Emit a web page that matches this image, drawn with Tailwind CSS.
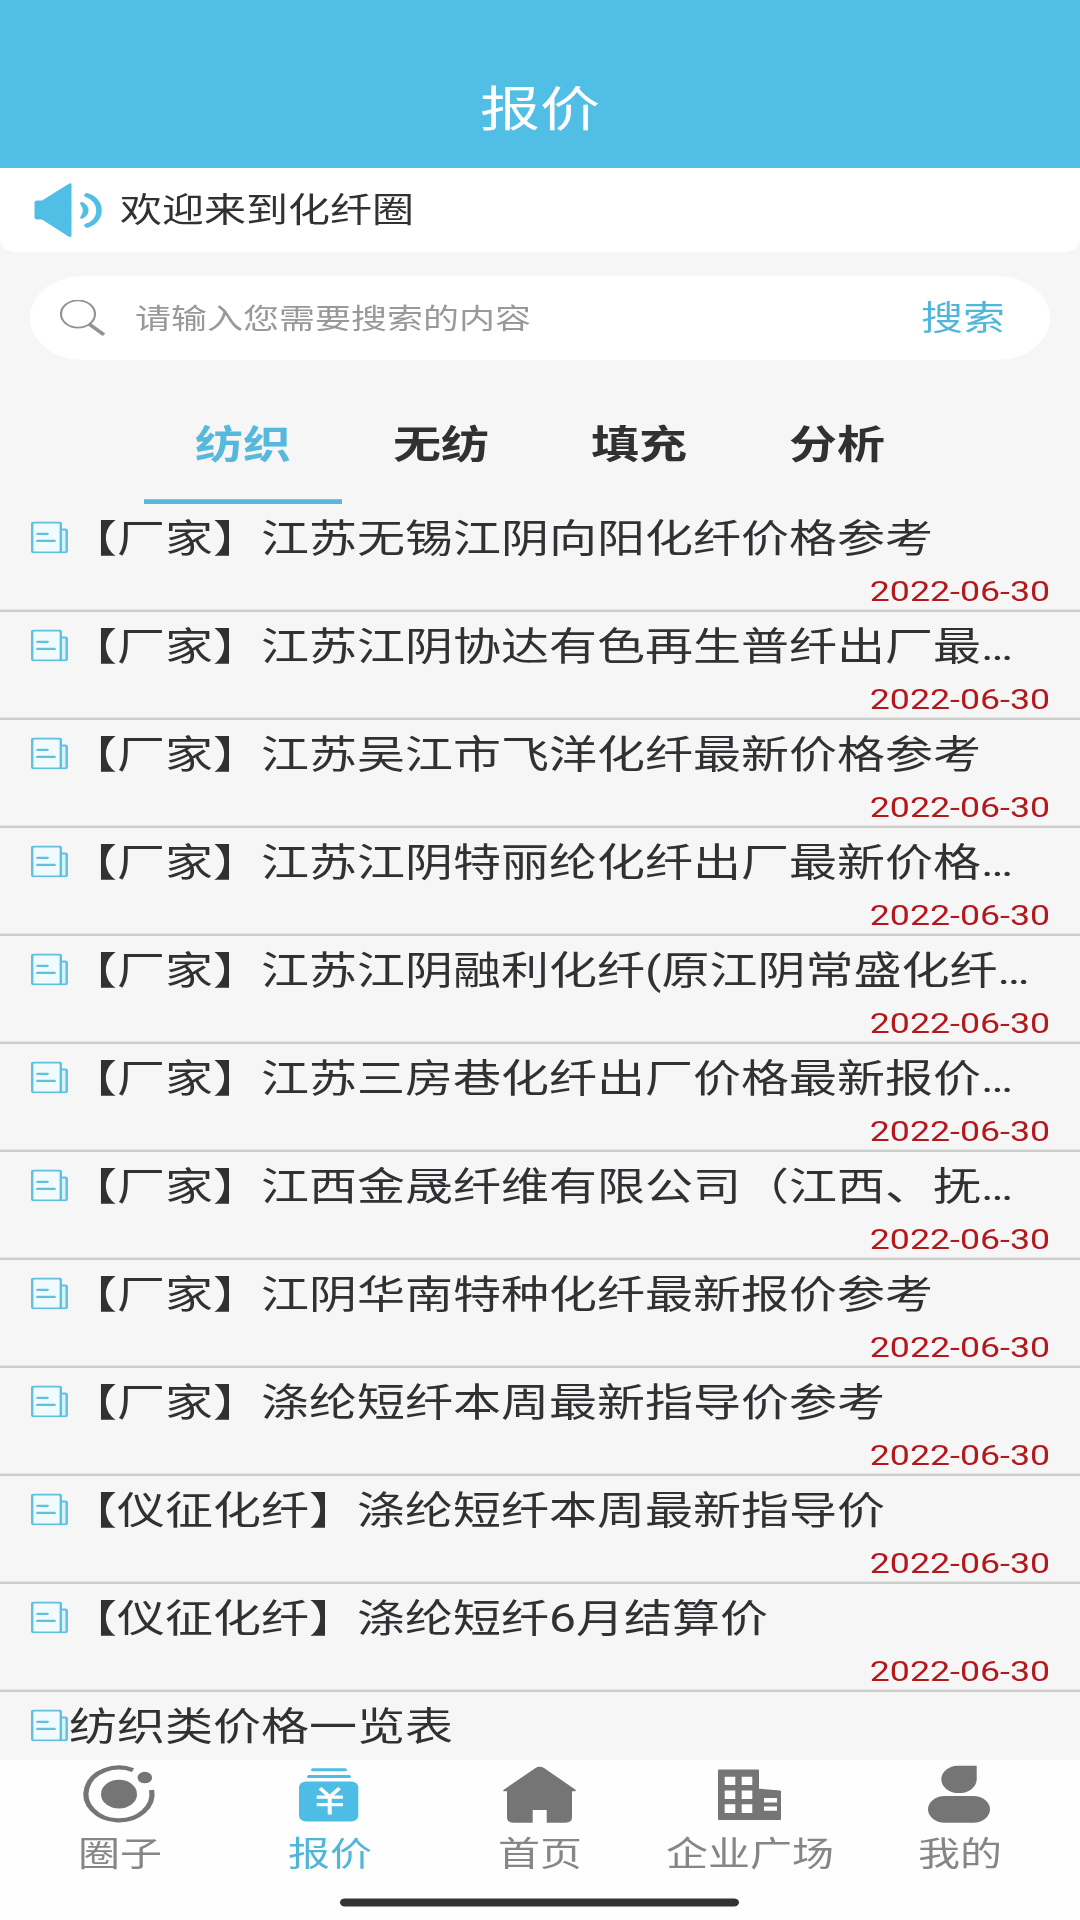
<!DOCTYPE html>
<html lang="zh-CN">
<head>
<meta charset="utf-8">
<title>报价</title>
<script src="https://cdn.jsdelivr.net/npm/@tailwindcss/browser@4"></script>
</head>
<body class="bg-[#f6f6f6]">
<svg class="hidden">
  <symbol id="doc" viewBox="0 0 37 40">
    <path d="M29.500 9.800h4.700q1.500 0 1.500 1.500v25.500q0 1.700-1.700 1.700H29z" fill="#d5f5fd" stroke="#62bfdd" stroke-width="2.400"/>
    <rect x="1.200" y="1.200" width="28.600" height="37.300" rx="1.800" fill="#effbff" stroke="#62bfdd" stroke-width="2.400"/>
    <path d="M6.500 15.200H16.500M6.500 24.200h17" stroke="#62bfdd" stroke-width="2.800" stroke-linecap="round"/>
  </symbol>
</svg>

<div class="h-[1920px] w-[1080px] overflow-hidden">
<div class="flex h-[2400px] w-[1080px] origin-top scale-y-[0.8] flex-col overflow-hidden font-[Roboto,'Noto_Sans_CJK_SC',sans-serif] text-[#303133]">
  <header class="flex h-[210px] shrink-0 items-end justify-center bg-[#51bee5] pb-[27px] text-[60px] leading-[90px] text-white">报价</header>

  <div class="flex h-[105px] shrink-0 items-center rounded-b-[16px] bg-white pl-[33px]">
    <svg class="h-[74px] w-[70px] shrink-0" viewBox="0 0 70 74">
      <path d="M4 24.500H9L35.500 4Q38.500 2 38.500 5V68.500Q38.500 71.500 35.500 69.500L9 48.500H4Q1.500 48.500 1.500 46V27Q1.500 24.500 4 24.500Z" fill="#51bee5"/>
      <path d="M49 26.500Q55.500 30 55.500 37T49 47.500Q46.500 48 47.500 44.500Q52 37 47.500 29.500Q46.500 26 49 26.500Z" fill="#51bee5"/>
      <path d="M54 18C70 24 70 50 54 56" fill="none" stroke="#51bee5" stroke-width="5.500" stroke-linecap="round"/>
    </svg>
    <span class="ml-[17px] pt-[3px] text-[42px] leading-[60px]">欢迎来到化纤圈</span>
  </div>

  <div class="mx-[30px] mt-[30px] flex h-[105px] shrink-0 items-center rounded-full bg-white pr-[45px] pl-[30px]">
    <svg class="h-[46px] w-[46px]" viewBox="0 0 46 46" fill="none" stroke="#929292">
      <circle cx="18" cy="17.500" r="17" stroke-width="2.200"/>
      <path d="M29 30l15 13.500" stroke-width="4"/>
    </svg>
    <span class="ml-[29px] flex-1 pt-[3px] text-[36px] leading-[54px] text-[#999]">请输入您需要搜索的内容</span>
    <span class="pt-[3px] text-[42px] leading-[60px] text-[#51b6da]">搜索</span>
  </div>

  <nav class="mx-[144px] mt-[60px] grid h-[120px] shrink-0 grid-cols-4 text-center text-[48px] leading-[92px] font-bold">
    <span class="border-b-[6px] border-[#56b8dc] text-[#56b8dc]">纺织</span>
    <span>无纺</span>
    <span>填充</span>
    <span>分析</span>
  </nav>

  <main class="min-h-0 flex-1 overflow-hidden text-[48px]">
    <article class="h-[135px] border-b-[3px] border-[#cdcdcd] pt-[9px] pr-[30px] pl-[31px]"><div class="flex h-[70px] items-center whitespace-nowrap"><svg class="mt-[-5px] mr-px h-[40px] w-[37px] shrink-0"><use href="#doc"/></svg><h2>【厂家】江苏无锡江阴向阳化纤价格参考</h2></div><time class="mt-[10px] block text-right text-[35.700px] leading-[40px] text-[#b3191c]">2022-06-30</time></article>
    <article class="h-[135px] border-b-[3px] border-[#cdcdcd] pt-[9px] pr-[30px] pl-[31px]"><div class="flex h-[70px] items-center whitespace-nowrap"><svg class="mt-[-5px] mr-px h-[40px] w-[37px] shrink-0"><use href="#doc"/></svg><h2>【厂家】江苏江阴协达有色再生普纤出厂最…</h2></div><time class="mt-[10px] block text-right text-[35.700px] leading-[40px] text-[#b3191c]">2022-06-30</time></article>
    <article class="h-[135px] border-b-[3px] border-[#cdcdcd] pt-[9px] pr-[30px] pl-[31px]"><div class="flex h-[70px] items-center whitespace-nowrap"><svg class="mt-[-5px] mr-px h-[40px] w-[37px] shrink-0"><use href="#doc"/></svg><h2>【厂家】江苏吴江市飞洋化纤最新价格参考</h2></div><time class="mt-[10px] block text-right text-[35.700px] leading-[40px] text-[#b3191c]">2022-06-30</time></article>
    <article class="h-[135px] border-b-[3px] border-[#cdcdcd] pt-[9px] pr-[30px] pl-[31px]"><div class="flex h-[70px] items-center whitespace-nowrap"><svg class="mt-[-5px] mr-px h-[40px] w-[37px] shrink-0"><use href="#doc"/></svg><h2>【厂家】江苏江阴特丽纶化纤出厂最新价格…</h2></div><time class="mt-[10px] block text-right text-[35.700px] leading-[40px] text-[#b3191c]">2022-06-30</time></article>
    <article class="h-[135px] border-b-[3px] border-[#cdcdcd] pt-[9px] pr-[30px] pl-[31px]"><div class="flex h-[70px] items-center whitespace-nowrap"><svg class="mt-[-5px] mr-px h-[40px] w-[37px] shrink-0"><use href="#doc"/></svg><h2>【厂家】江苏江阴融利化纤(原江阴常盛化纤…</h2></div><time class="mt-[10px] block text-right text-[35.700px] leading-[40px] text-[#b3191c]">2022-06-30</time></article>
    <article class="h-[135px] border-b-[3px] border-[#cdcdcd] pt-[9px] pr-[30px] pl-[31px]"><div class="flex h-[70px] items-center whitespace-nowrap"><svg class="mt-[-5px] mr-px h-[40px] w-[37px] shrink-0"><use href="#doc"/></svg><h2>【厂家】江苏三房巷化纤出厂价格最新报价…</h2></div><time class="mt-[10px] block text-right text-[35.700px] leading-[40px] text-[#b3191c]">2022-06-30</time></article>
    <article class="h-[135px] border-b-[3px] border-[#cdcdcd] pt-[9px] pr-[30px] pl-[31px]"><div class="flex h-[70px] items-center whitespace-nowrap"><svg class="mt-[-5px] mr-px h-[40px] w-[37px] shrink-0"><use href="#doc"/></svg><h2>【厂家】江西金晟纤维有限公司（江西、抚…</h2></div><time class="mt-[10px] block text-right text-[35.700px] leading-[40px] text-[#b3191c]">2022-06-30</time></article>
    <article class="h-[135px] border-b-[3px] border-[#cdcdcd] pt-[9px] pr-[30px] pl-[31px]"><div class="flex h-[70px] items-center whitespace-nowrap"><svg class="mt-[-5px] mr-px h-[40px] w-[37px] shrink-0"><use href="#doc"/></svg><h2>【厂家】江阴华南特种化纤最新报价参考</h2></div><time class="mt-[10px] block text-right text-[35.700px] leading-[40px] text-[#b3191c]">2022-06-30</time></article>
    <article class="h-[135px] border-b-[3px] border-[#cdcdcd] pt-[9px] pr-[30px] pl-[31px]"><div class="flex h-[70px] items-center whitespace-nowrap"><svg class="mt-[-5px] mr-px h-[40px] w-[37px] shrink-0"><use href="#doc"/></svg><h2>【厂家】涤纶短纤本周最新指导价参考</h2></div><time class="mt-[10px] block text-right text-[35.700px] leading-[40px] text-[#b3191c]">2022-06-30</time></article>
    <article class="h-[135px] border-b-[3px] border-[#cdcdcd] pt-[9px] pr-[30px] pl-[31px]"><div class="flex h-[70px] items-center whitespace-nowrap"><svg class="mt-[-5px] mr-px h-[40px] w-[37px] shrink-0"><use href="#doc"/></svg><h2>【仪征化纤】涤纶短纤本周最新指导价</h2></div><time class="mt-[10px] block text-right text-[35.700px] leading-[40px] text-[#b3191c]">2022-06-30</time></article>
    <article class="h-[135px] border-b-[3px] border-[#cdcdcd] pt-[9px] pr-[30px] pl-[31px]"><div class="flex h-[70px] items-center whitespace-nowrap"><svg class="mt-[-5px] mr-px h-[40px] w-[37px] shrink-0"><use href="#doc"/></svg><h2>【仪征化纤】涤纶短纤6月结算价</h2></div><time class="mt-[10px] block text-right text-[35.700px] leading-[40px] text-[#b3191c]">2022-06-30</time></article>
    <article class="h-[85px] pt-[9px] pr-[30px] pl-[31px]"><div class="flex h-[70px] items-center whitespace-nowrap"><svg class="mt-[-5px] mr-px h-[40px] w-[37px] shrink-0"><use href="#doc"/></svg><h2>纺织类价格一览表</h2></div></article>
  </main>

  <footer class="flex h-[200px] shrink-0 flex-col items-center bg-[#fefefe] pt-[7px]">
    <div class="grid w-[1050px] grid-cols-5 text-[42px] leading-[62px] text-[#868686]">
      <div class="flex flex-col items-center gap-[9px]">
        <svg class="h-[72px] w-[72px] overflow-visible" viewBox="0 0 72 72" fill="#757575">
          <path d="M67.600 30.500A33 33 0 1 1 49 5.600" fill="none" stroke="#757575" stroke-width="5.200"/>
          <circle cx="35" cy="35.700" r="18"/><circle cx="60.800" cy="14.900" r="7.300"/>
        </svg>圈子
      </div>
      <div class="flex flex-col items-center gap-[9px] text-[#51b6da]">
        <svg class="h-[72px] w-[72px]" viewBox="0 0 72 72" fill="#4dbde5">
          <rect x="17" y="3.200" width="36" height="3.800" rx="1.900"/><rect x="13" y="11.600" width="44" height="3.800" rx="1.900"/>
          <rect x="5" y="20" width="59.300" height="49.800" rx="7"/>
          <path d="M26 28.200L35.700 39L45.500 28.200M22.700 39.500H49M22.700 48.700H49M35.700 38V61" fill="none" stroke="#fff" stroke-width="4"/>
        </svg>报价
      </div>
      <div class="flex flex-col items-center gap-[9px]">
        <svg class="h-[72px] w-[72px] overflow-visible" viewBox="0 0 72 72" fill="#757575">
          <path d="M31.500 3Q35.700 0 40 3L71.200 30Q72.500 31.500 71 32.200H68V64.500Q68 71.300 61.500 71.300H42.700V55.500H28.700V71.300H9.500Q3 71.300 3 64.500V32.200H0Q-1.500 31.500 0 30Z"/>
        </svg>首页
      </div>
      <div class="flex flex-col items-center gap-[9px]">
        <svg class="h-[72px] w-[72px]" viewBox="0 0 72 72" fill="#757575">
          <path fill-rule="evenodd" d="M5 5H44Q45 5 45 6V28.800L66 31Q67 31.200 67 32V67Q67 68 66 68H5Q4 68 4 67V6Q4 5 5 5ZM10.700 13.800v10.500h10.600V13.800ZM27.700 13.800v10.500h10.600V13.800ZM10.700 31.200v10.600h10.600V31.200ZM27.700 31.200v10.600h10.600V31.200ZM10.700 48.300v11h10.600v-11ZM27.700 48.300v11h10.600v-11ZM50 40.500V46h13v-5.500ZM50 51v5.500h13V51Z"/>
        </svg>企业广场
      </div>
      <div class="flex flex-col items-center gap-[9px]">
        <svg class="h-[72px] w-[72px]" viewBox="0 0 72 72" fill="#757575">
          <path d="M34.500 0H52.700V17.500A17.700 17.200 0 1 1 34.500 0Z"/><rect x="4" y="38" width="62" height="33.300" rx="16.600"/>
        </svg>我的
      </div>
    </div>
    <div class="mt-[23px] mr-px h-[10px] w-[399px] rounded-full bg-[#333]"></div>
  </footer>
</div>
</div>
</body>
</html>
